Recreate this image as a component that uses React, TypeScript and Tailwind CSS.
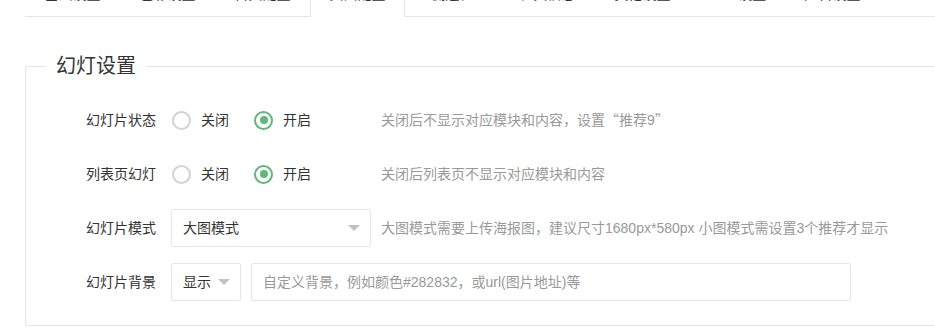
import React from "react";

const FONT = '"Liberation Sans", "Noto Sans CJK SC", sans-serif';
const CJK = '"Noto Sans CJK SC", sans-serif';

const tabs = ["基础设置", "色彩设置", "首页配置", "页面配置", "侧边栏", "社交信息", "其他设置", "SEO设置", "广告设置"];

function Radio({ checked, label }: { checked?: boolean; label: string }) {
  return (
    <div className="flex items-center">
      <span
        className={
          checked
            ? "flex h-[19px] w-[19px] items-center justify-center rounded-full border-2 border-[#5FB878]"
            : "flex h-[19px] w-[19px] items-center justify-center rounded-full border-2 border-[#d2d2d2]"
        }
      >
        {checked && <span className="h-[8px] w-[8px] rounded-full bg-[#5FB878]" />}
      </span>
      <span className="ml-[10px] text-[14px] text-[#333]">{label}</span>
    </div>
  );
}

function Arrow() {
  return (
    <span className="h-0 w-0 border-x-[6px] border-t-[6px] border-x-transparent border-t-[#c2c2c2]" />
  );
}

function Row({ label, children, hint }: { label: string; children: React.ReactNode; hint?: React.ReactNode }) {
  return (
    <div className="flex h-[38px] items-center">
      <div className="ml-[60px] w-[85px] shrink-0 text-[14px] text-[#333]">{label}</div>
      {children}
      {hint && <div className="ml-[10px] whitespace-nowrap text-[14px] text-[#999]">{hint}</div>}
    </div>
  );
}

export default function App() {
  return (
    <div className="h-[333px] w-[935px] overflow-hidden bg-white" style={{ fontFamily: FONT }}>
      <div className="-mt-[24px] ml-[25px] flex h-[41px] border-b border-[#e6e6e6]">
        {tabs.map((t, i) =>
          i === 3 ? (
            <div
              key={t}
              className="-mb-px flex h-[41px] w-[95px] shrink-0 items-center justify-center border-x border-t border-[#e6e6e6] bg-white pb-[5px] text-[14px] text-[#333]"
            >
              {t}
            </div>
          ) : (
            <div key={t} className="flex h-[40px] w-[95px] shrink-0 items-center justify-center pb-[4px] text-[14px] text-[#333]">
              {t}
            </div>
          )
        )}
      </div>

      <fieldset className="ml-[25px] mt-[37px] w-[930px] rounded-[2px] border border-[#e6e6e6] pb-[24px]">
        <legend className="ml-[20px] px-[10px] text-[20px] font-normal leading-[24px] text-[#333]">幻灯设置</legend>
        <div className="flex flex-col gap-[16px] pt-[23px]">
          <Row
            label="幻灯片状态"
            hint={
              <>
                关闭后不显示对应模块和内容，设置<span style={{ fontFamily: CJK }}>“</span>推荐9<span style={{ fontFamily: CJK }}>”</span>
              </>
            }
          >
            <div className="flex w-[200px] items-center gap-[25px] pl-[1px]">
              <Radio label="关闭" />
              <Radio checked label="开启" />
            </div>
          </Row>
          <Row label="列表页幻灯" hint="关闭后列表页不显示对应模块和内容">
            <div className="flex w-[200px] items-center gap-[25px] pl-[1px]">
              <Radio label="关闭" />
              <Radio checked label="开启" />
            </div>
          </Row>
          <Row label="幻灯片模式" hint="大图模式需要上传海报图，建议尺寸1680px*580px 小图模式需设置3个推荐才显示">
            <div className="flex h-[38px] w-[200px] items-center justify-between rounded-[2px] border border-[#e6e6e6] pl-[11px] pr-[10px] text-[14px] text-[#333]">
              <span>大图模式</span>
              <Arrow />
            </div>
          </Row>
          <Row label="幻灯片背景">
            <div className="flex h-[38px] w-[70px] items-center justify-between rounded-[2px] border border-[#e6e6e6] pl-[11px] pr-[10px] text-[14px] text-[#333]">
              <span>显示</span>
              <Arrow />
            </div>
            <div className="ml-[10px] flex h-[38px] w-[600px] items-center rounded-[2px] border border-[#e6e6e6] pl-[11px] text-[14px] text-[#999]">
              自定义背景，例如颜色#282832，或url(图片地址)等
            </div>
          </Row>
        </div>
      </fieldset>
    </div>
  );
}
